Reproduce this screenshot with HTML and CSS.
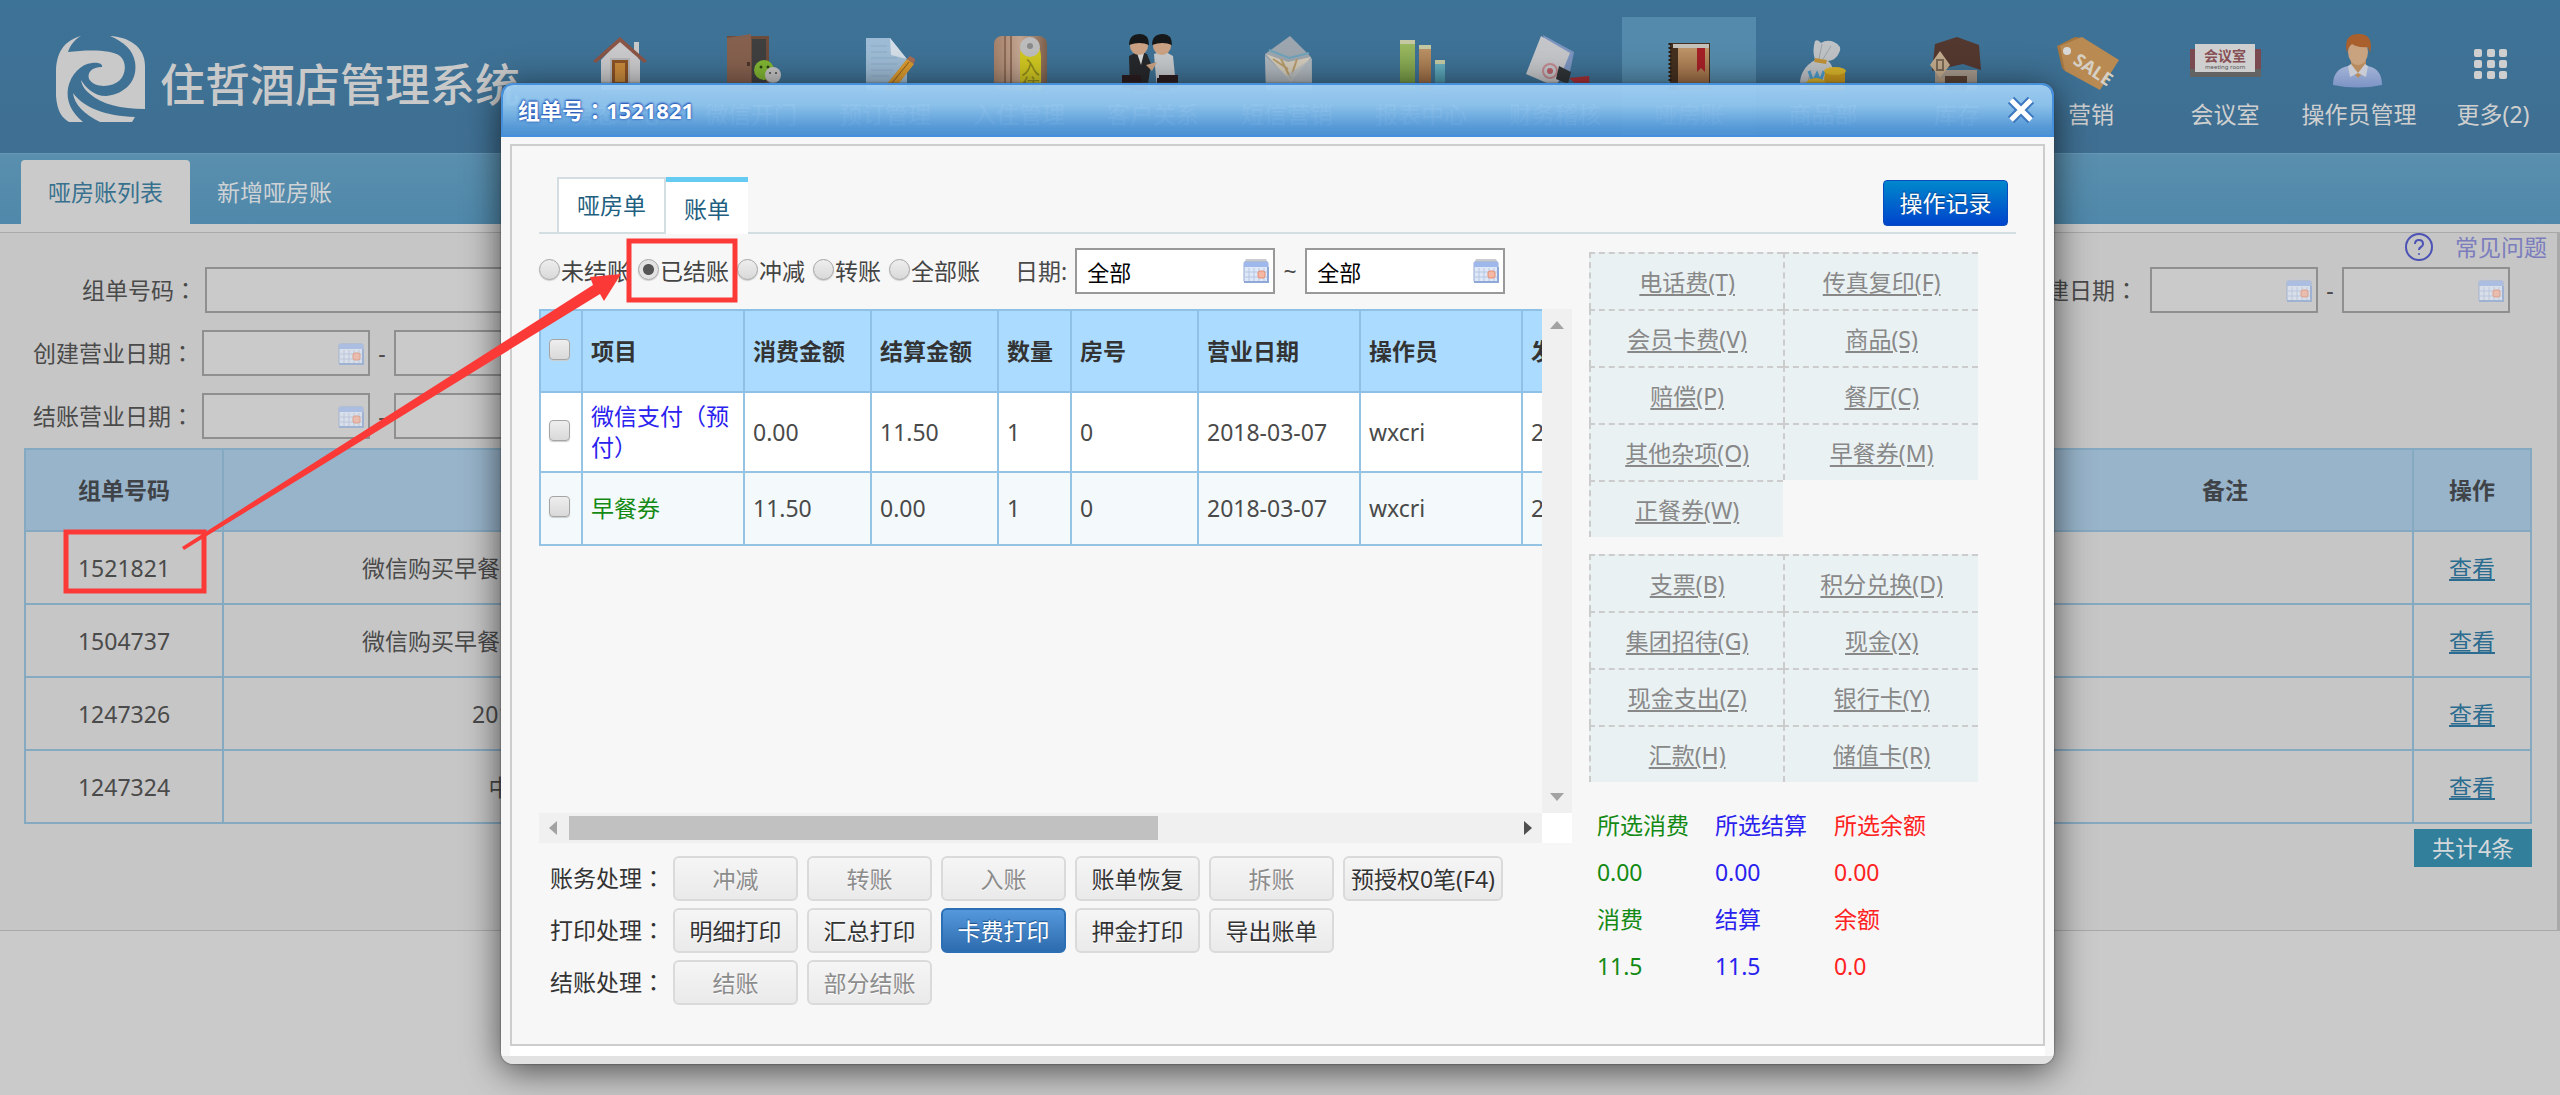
FILE: index.html
```html
<!DOCTYPE html>
<html lang="zh-CN">
<head>
<meta charset="utf-8">
<title>住哲酒店管理系统</title>
<link rel="stylesheet" href="styles.css">
</head>
<body>
<svg class="defs" aria-hidden="true">
  <defs>
    <linearGradient id="g-green" x1="0" x2="0" y1="0" y2="1"><stop offset="0" stop-color="#9dbb62"/><stop offset="1" stop-color="#6f9440"/></linearGradient>
    <linearGradient id="g-brown" x1="0" x2="0" y1="0" y2="1"><stop offset="0" stop-color="#bd9468"/><stop offset="1" stop-color="#94633c"/></linearGradient>
    <linearGradient id="g-cyan" x1="0" x2="0" y1="0" y2="1"><stop offset="0" stop-color="#6fb4c4"/><stop offset="1" stop-color="#3d8ca2"/></linearGradient>
    <linearGradient id="g-blue" x1="0" x2="0" y1="0" y2="1"><stop offset="0" stop-color="#a3b3d6"/><stop offset="1" stop-color="#7c93c4"/></linearGradient>
    <linearGradient id="g-wood" x1="0" x2="1" y1="0" y2="0"><stop offset="0" stop-color="#a38069"/><stop offset=".5" stop-color="#c2a591"/><stop offset="1" stop-color="#7d604c"/></linearGradient>
  </defs>
  <symbol id="calendar" viewBox="0 0 26 24">
    <path d="M3 0h20l2 4H1z" fill="#c9cbd0"/>
    <rect x="1" y="3" width="24" height="20" rx="1" fill="#dfe8f8" stroke="#93a9d0"/>
    <rect x="1" y="3" width="24" height="5" fill="#9fb8ec"/>
    <path d="M6 9v13M11 9v13M16 9v13M21 9v13M2 13h22M2 18h22" stroke="#b7c6e2" fill="none"/>
    <rect x="15" y="12" width="7" height="7" rx="2" fill="#f5b8a4" stroke="#e78e72"/>
    <path d="M1 23h24V8" stroke="#8fa8d6" fill="none" stroke-width="2"/>
  </symbol>
</svg>

<header class="header">
  <div class="brand">
    <svg class="logo" viewBox="0 0 90 86" aria-hidden="true" fill="#c9c9c9">
      <path d="M25 0C10 4 1 14 0 34v26c1 15 6 22 13 26h14C15 76 10 65 12 52c3-14 13-24 24-25 8-1 11 2 10 4-10 0-15 5-13 12 5 9 23 9 31 1 6-6 7-18 0-24-9-7-34-6-52-4 2-6 6-12 13-16z"/>
      <path d="M54 0c18 1 35 10 35 30v43c-24 0-44-5-55-15-5-4-8-8-9-14 5 8 13 16 25 16 20-2 32-16 29-34C77 14 68 6 54 0z"/>
      <path d="M17 57c11 15 33 23 62 24l-3 5H44C28 78 18 68 17 57z"/>
    </svg>
    <span class="brand-name">住哲酒店管理系统</span>
  </div>
  <nav class="nav">
    <a class="nav-item" href="#"><svg class="nav-icon" viewBox="0 0 72 56"><path d="M53 8h5v16h-5z" fill="#c8c8c8"/><path d="M39 6 20 26v30h39V26z" fill="#c9c9cb"/><path d="M39 3 12 27l3 2 24-21 24 21 3-2z" fill="#8a5446"/><path d="M29 24h20v26H29z" fill="#b5b5b8"/><path d="M31 26h16v24H31z" fill="#8b5226"/><path d="M34 29h10v19H34z" fill="#c98a3c"/></svg><span>房态中心</span></a>
    <a class="nav-item" href="#"><svg class="nav-icon" viewBox="0 0 72 56"><path d="M12 2h42v54H12z" fill="#6e4c3c"/><path d="M37 5h14v51H37z" fill="#3f3f3f"/><path d="M12 4 36 0v56H12z" fill="#85604e"/><path d="M32 28h3v4h-3z" fill="#4e3429"/><circle cx="49" cy="36" r="10" fill="#80b533"/><circle cx="46" cy="33" r="1.500" fill="#2c4214"/><circle cx="53" cy="33" r="1.500" fill="#2c4214"/><circle cx="58" cy="41" r="8" fill="#c3c3c3"/><circle cx="55" cy="39" r="1" fill="#444"/><circle cx="61" cy="39" r="1" fill="#444"/></svg><span>微信开门</span></a>
    <a class="nav-item" href="#"><svg class="nav-icon" viewBox="0 0 72 56"><path d="M17 4h24l17 22v30H17z" fill="#9dbbd4"/><path d="m41 4 17 21-16-4z" fill="#d3dde6"/><path d="M22 12h16M22 18h16M22 24h26M22 30h26M22 36h22M22 42h18" stroke="#8babc6" stroke-width="1"/><path d="m58 25 7 5-21 27-9 3 2-9z" fill="#d99a2e"/><path d="m58 25 3-3 5 3-1 5z" fill="#a96b52"/><path d="m60 28-21 26" stroke="#8c5a1c"/></svg><span>预订管理</span></a>
    <a class="nav-item" href="#"><svg class="nav-icon" viewBox="0 0 72 56"><rect x="11" y="2" width="53" height="54" rx="8" fill="url(#g-wood)"/><path d="M22 2v54M28 2v54" stroke="#8c6a55" stroke-width="2"/><path d="M37 22q0-14 10-14t11 14v34H37z" fill="#cfc621"/><circle cx="47" cy="13" r="10" fill="#bcbcbc"/><circle cx="47" cy="12" r="3" fill="#8a8a8a"/><text x="38" y="41" font-size="19" fill="#8f8a1a">入</text><text x="38" y="59" font-size="19" fill="#8f8a1a">住</text></svg><span>入住管理</span></a>
    <a class="nav-item" href="#"><svg class="nav-icon" viewBox="0 0 72 56"><path d="m12 22 10-5 8 3 4 10-4 26H13z" fill="#26282b"/><path d="m37 20 10-3 9 5 2 20-5 14H40z" fill="#c4c8cb"/><path d="m20 19 4 12 3-12z" fill="#d6d6d6"/><path d="M40 44h13v12H40zM5 41h19v13H5zM42 41h19v13H42z" fill="#2b1d1f"/><ellipse cx="22" cy="12" rx="9" ry="9" fill="#caa283"/><ellipse cx="45" cy="12" rx="9" ry="9" fill="#caa283"/><path d="M12 11Q12 0 23 0q9 0 9 11-9-4-20 0zM35 11Q35 0 46 0q9 0 9 11-9-4-20 0z" fill="#16181a"/><path d="m29 31 11-3-5 9z" fill="#caa283"/></svg><span>客户关系</span></a>
    <a class="nav-item" href="#"><svg class="nav-icon" viewBox="0 0 72 56"><path d="M14 20 39 2l21 21 1 33H15z" fill="#9da6ae"/><path d="m15 20 22 8 23-5-20 25z" fill="#d2cbbb"/><path d="m18 16 20 8 20-5" fill="none" stroke="#6ea3bb" stroke-width="2"/><path d="m22 25 15 10M30 25l10 20M46 25l-5 15" stroke="#b79b6a" stroke-width="2"/><path d="m14 22 22 20 5-4 20-14v32H15z" fill="#b3bac0" opacity=".8"/></svg><span>短信营销</span></a>
    <a class="nav-item" href="#"><svg class="nav-icon" viewBox="0 0 72 56"><path d="M15 6h15v50H15z" fill="url(#g-green)"/><path d="M34 11h12v45H34z" fill="url(#g-brown)"/><path d="M50 26h10v30H50z" fill="url(#g-cyan)"/><path d="M15 6h15v4H15zM34 11h12v4H34zM50 26h10v4H50z" fill="#c4c9a4"/></svg><span>报表中心</span></a>
    <a class="nav-item" href="#"><svg class="nav-icon" viewBox="0 0 72 56"><path d="m24 1 31 17-4 20-14 12z" fill="#7b94bf"/><path d="m22 2 29 17-14 34L7 40z" fill="#c4c5c8"/><circle cx="31" cy="37" r="7" fill="none" stroke="#c08a90" stroke-width="2"/><circle cx="31" cy="37" r="3" fill="#b8606a"/><path d="m40 32 12 6-3 12-12-5z" fill="#313538"/><path d="m50 44 20-2 1 12-12-2z" fill="#a82e35"/></svg><span>财务稽核</span></a>
    <a class="nav-item active" href="#"><svg class="nav-icon" viewBox="0 0 72 56"><path d="M17 9h40v47H17z" fill="#45301f"/><path d="M20 10h36v4H20z" fill="#c4c0ba"/><path d="M25 14h31v42H25z" fill="url(#g-brown)"/><path d="M44 14h8v24l-4-4-4 4z" fill="#a32127"/><path d="M17 9v47" stroke="#2c1e14" stroke-width="3" stroke-dasharray="2 2"/></svg><span>哑房账</span></a>
    <a class="nav-item" href="#"><svg class="nav-icon" viewBox="0 0 72 56"><path d="M28 7q3-2 6 2 6-4 13-1 9 4 5 11-3 7-11 8 8 6 6 29H13q-2-21 15-30-3-9 0-19z" fill="#bfc2c5"/><path d="m35 10-3 15M44 12l-8 13M24 36l-4 16" stroke="#9da2a7"/><path d="m28 24 12 2-1 4-12-2z" fill="#bf9337"/><path d="m22 37 4 11 4-8 3 8 4-11" fill="none" stroke="#4b9ccb" stroke-width="3"/><path d="M38 38h20v18H36z" fill="#cc9a1c"/><ellipse cx="48" cy="37" rx="11" ry="4" fill="#d9b42c"/><ellipse cx="29" cy="50" rx="10" ry="6" fill="#d9b42c"/></svg><span>商品部</span></a>
    <a class="nav-item" href="#"><svg class="nav-icon" viewBox="0 0 72 56"><path d="m14 10 22-7 22 8 2 25-18-6-31 7z" fill="#53382f"/><path d="M14 36h42v20H14z" fill="#a79a8d"/><path d="M24 42h22v14H24z" fill="#5b4232"/><path d="m19 17 10 14-10 13L9 31z" fill="#c2ab8d"/><path d="M16 26h6v10h-6z" fill="none" stroke="#7b6955" stroke-width="2"/><path d="M17 44h6v12h-6z" fill="#b59c80"/></svg><span>库存</span></a>
    <a class="nav-item" href="#"><svg class="nav-icon" viewBox="0 0 72 56"><path d="m2 12 18-9 8 1-17 7-1 26-3-3z" fill="#a57640"/><path d="m5 12 22-9 37 23-19 30L10 37z" fill="#b98a52"/><circle cx="12" cy="17" r="4" fill="#d8d8d8"/><text class="sale-text" x="17" y="29" transform="rotate(34 17 29)">SALE</text></svg><span>营销</span></a>
    <a class="nav-item" href="#"><svg class="nav-icon" viewBox="0 0 72 56"><path d="M1 15h71v28H1z" fill="#636363"/><path d="M1 15h5v20H1zM66 15h6v20h-6z" fill="#7a4a50"/><path d="M6 10h60v28H6z" fill="#cfcfcf"/><text class="room-text" x="15" y="27">会议室</text><text class="room-sub" x="16" y="35">meeting room</text></svg><span>会议室</span></a>
    <a class="nav-item" href="#"><svg class="nav-icon" viewBox="0 0 72 56"><path d="M10 51q0-16 15-19l10 6 10-6q14 3 14 19-24 5-49 0z" fill="url(#g-blue)"/><path d="M28 24h15v12l-8 8-7-8z" fill="#b98c60"/><path d="m25 32 3-2 7 9-8 4zM45 32l-3-2-7 9 8 4z" fill="#c9ccd4"/><ellipse cx="35" cy="18" rx="10" ry="13" fill="#c9a280"/><path d="M24 19C21 4 27 0 36 0c10 0 14 7 11 19l-2-6c-7 1-13-1-16-3q-4 3-5 9z" fill="#a9602c"/></svg><span>操作员管理</span></a>
    <a class="nav-item" href="#"><svg class="nav-icon" viewBox="0 0 72 56"><g fill="#cfcfcf"><rect x="17" y="15" width="8" height="8" rx="2"/><rect x="30" y="15" width="8" height="8" rx="2"/><rect x="42" y="15" width="8" height="8" rx="2"/><rect x="17" y="26" width="8" height="8" rx="2"/><rect x="30" y="26" width="8" height="8" rx="2"/><rect x="42" y="26" width="8" height="8" rx="2"/><rect x="17" y="37" width="8" height="8" rx="2"/><rect x="30" y="37" width="8" height="8" rx="2"/><rect x="42" y="37" width="8" height="8" rx="2"/></g></svg><span>更多(2)</span></a>
  </nav>
</header>

<nav class="subnav">
  <a class="subnav-tab current" href="#">哑房账列表</a>
  <a class="subnav-tab" href="#">新增哑房账</a>
</nav>

<main class="panel">
  <a class="faq" href="#">
    <svg class="faq-icon" viewBox="0 0 30 30" aria-hidden="true"><circle cx="15" cy="15" r="13" fill="none" stroke="#4d53b5" stroke-width="2"/><path d="M11 12q0-4 4-4t4 4q0 2-2 3-2 1-2 3" fill="none" stroke="#4d53b5" stroke-width="2"/><circle cx="15" cy="22" r="1" fill="#4d53b5"/></svg>
    <span>常见问题</span>
  </a>
  <form class="filters">
    <div class="filter-row">
      <label class="filter-label code" for="code">组单号码<span class="colon" lang="zh-TW">：</span></label>
      <input class="box wide" id="code" type="text">
      <div class="filter-end">
        <label class="filter-label" for="c1">创建日期<span class="colon" lang="zh-TW">：</span></label>
        <span class="date"><input class="box" id="c1" type="text"><svg class="cal"><use href="#calendar"/></svg></span>
        <span class="dash">-</span>
        <span class="date"><input class="box" type="text" aria-label="创建日期止"><svg class="cal"><use href="#calendar"/></svg></span>
      </div>
    </div>
    <div class="filter-row">
      <label class="filter-label" for="b1">创建营业日期<span class="colon" lang="zh-TW">：</span></label>
      <span class="date"><input class="box" id="b1" type="text"><svg class="cal"><use href="#calendar"/></svg></span>
      <span class="dash">-</span>
      <span class="date"><input class="box" type="text" aria-label="创建营业日期止"><svg class="cal"><use href="#calendar"/></svg></span>
    </div>
    <div class="filter-row">
      <label class="filter-label" for="s1">结账营业日期<span class="colon" lang="zh-TW">：</span></label>
      <span class="date"><input class="box" id="s1" type="text"><svg class="cal"><use href="#calendar"/></svg></span>
      <span class="dash">-</span>
      <span class="date"><input class="box" type="text" aria-label="结账营业日期止"><svg class="cal"><use href="#calendar"/></svg></span>
    </div>
  </form>
  <table class="orders">
    <colgroup><col class="o-code"><col class="o-name"><col><col class="o-note"><col class="o-op"></colgroup>
    <thead><tr><th>组单号码</th><th>组单名称</th><th></th><th>备注</th><th>操作</th></tr></thead>
    <tbody>
      <tr><td>1521821</td><td>微信购买早餐券自动创建的哑房账单</td><td></td><td></td><td><a href="#">查看</a></td></tr>
      <tr><td>1504737</td><td>微信购买早餐券自动创建的哑房账单</td><td></td><td></td><td><a href="#">查看</a></td></tr>
      <tr><td>1247326</td><td>201712哑房账</td><td></td><td></td><td><a href="#">查看</a></td></tr>
      <tr><td>1247324</td><td>中餐厅挂账</td><td></td><td></td><td><a href="#">查看</a></td></tr>
    </tbody>
  </table>
  <div class="total">共计4条</div>
</main>

<section class="dialog" role="dialog" aria-label="组单号：1521821">
  <div class="dialog-title">
    <h1>组单号<span class="colon" lang="zh-TW">：</span>1521821</h1>
    <button class="close" type="button" aria-label="关闭"><svg viewBox="0 0 32 32"><path d="m6 6 20 20M26 6 6 26" stroke="#3b78c0" stroke-width="9"/><path d="m6 6 20 20M26 6 6 26" stroke="#fff" stroke-width="5"/></svg></button>
  </div>
  <div class="dialog-body">
  <div class="dialog-frame">
    <div class="tabs">
      <a class="tab" href="#">哑房单</a>
      <a class="tab on" href="#">账单</a>
      <button class="log-btn" type="button">操作记录</button>
    </div>
    <div class="columns">
      <div class="left">
        <div class="status">
          <label class="opt"><input type="radio" name="st">未结账</label>
          <label class="opt"><input type="radio" name="st" checked>已结账</label>
          <label class="opt"><input type="radio" name="st">冲减</label>
          <label class="opt"><input type="radio" name="st">转账</label>
          <label class="opt"><input type="radio" name="st">全部账</label>
          <label class="range-label" for="d1">日期:</label>
          <span class="date big"><input class="box" id="d1" type="text" value="全部"><svg class="cal"><use href="#calendar"/></svg></span>
          <span class="tilde">~</span>
          <span class="date big"><input class="box" type="text" value="全部" aria-label="日期止"><svg class="cal"><use href="#calendar"/></svg></span>
        </div>
        <div class="scroller">
          <div class="viewport">
            <table class="bill">
              <colgroup><col class="w-check"><col class="w-item"><col class="w-money"><col class="w-money"><col class="w-qty"><col class="w-money"><col class="w-item"><col class="w-item"><col class="w-item"></colgroup>
              <thead><tr><th><input type="checkbox" aria-label="全选"></th><th>项目</th><th>消费金额</th><th>结算金额</th><th>数量</th><th>房号</th><th>营业日期</th><th>操作员</th><th>发生时间</th></tr></thead>
              <tbody>
                <tr class="tall"><td><input type="checkbox" aria-label="微信支付"></td><td class="blue">微信支付<span class="paren" lang="zh-TW">（</span>预付<span class="paren" lang="zh-TW">）</span></td><td>0.00</td><td>11.50</td><td>1</td><td>0</td><td>2018-03-07</td><td>wxcri</td><td>2018-03-07</td></tr>
                <tr><td><input type="checkbox" aria-label="早餐券"></td><td class="green">早餐券</td><td>11.50</td><td>0.00</td><td>1</td><td>0</td><td>2018-03-07</td><td>wxcri</td><td>2018-03-07</td></tr>
              </tbody>
            </table>
          </div>
          <div class="vbar"><svg viewBox="0 0 14 8"><path d="M0 8 7 0l7 8z" fill="#a3a3a3"/></svg><svg viewBox="0 0 14 8"><path d="m0 0 7 8 7-8z" fill="#a3a3a3"/></svg></div>
          <div class="hbar"><svg viewBox="0 0 8 14"><path d="M8 0 0 7l8 7z" fill="#a3a3a3"/></svg><div class="thumb-track"><div class="thumb"></div></div><svg viewBox="0 0 8 14"><path d="m0 0 8 7-8 7z" fill="#4f4f4f"/></svg></div>
          <div class="corner"></div>
        </div>
        <div class="actions">
          <div class="action-row"><span class="action-label">账务处理<span class="colon" lang="zh-TW">：</span></span><button class="btn" disabled>冲减</button><button class="btn" disabled>转账</button><button class="btn" disabled>入账</button><button class="btn">账单恢复</button><button class="btn" disabled>拆账</button><button class="btn long">预授权0笔(F4)</button></div>
          <div class="action-row"><span class="action-label">打印处理<span class="colon" lang="zh-TW">：</span></span><button class="btn">明细打印</button><button class="btn">汇总打印</button><button class="btn primary">卡费打印</button><button class="btn">押金打印</button><button class="btn">导出账单</button></div>
          <div class="action-row"><span class="action-label">结账处理<span class="colon" lang="zh-TW">：</span></span><button class="btn" disabled>结账</button><button class="btn" disabled>部分结账</button></div>
        </div>
      </div>
      <aside class="side">
        <div class="links">
          <a href="#">电话费(T)</a><a href="#">传真复印(F)</a>
          <a href="#">会员卡费(V)</a><a href="#">商品(S)</a>
          <a href="#">赔偿(P)</a><a href="#">餐厅(C)</a>
          <a href="#">其他杂项(O)</a><a href="#">早餐券(M)</a>
          <a href="#">正餐券(W)</a>
        </div>
        <div class="links">
          <a href="#">支票(B)</a><a href="#">积分兑换(D)</a>
          <a href="#">集团招待(G)</a><a href="#">现金(X)</a>
          <a href="#">现金支出(Z)</a><a href="#">银行卡(Y)</a>
          <a href="#">汇款(H)</a><a href="#">储值卡(R)</a>
        </div>
        <div class="sums">
          <span class="green">所选消费</span><span class="blue">所选结算</span><span class="red">所选余额</span>
          <span class="green">0.00</span><span class="blue">0.00</span><span class="red">0.00</span>
          <span class="green">消费</span><span class="blue">结算</span><span class="red">余额</span>
          <span class="green">11.5</span><span class="blue">11.5</span><span class="red">0.0</span>
        </div>
      </aside>
    </div>
  </div>
  </div>
</section>

<svg class="marks" viewBox="0 0 760 620" aria-hidden="true">
  <rect x="66" y="532" width="138" height="59" fill="none" stroke="#fb3a38" stroke-width="5"/>
  <rect x="629" y="241" width="106" height="59" fill="none" stroke="#fb3a38" stroke-width="5"/>
  <path d="M182 547 593 285l-3-8 31-3-17 27-4-7L184 550z" fill="#fb3a38"/>
</svg>
</body>
</html>
```
FILE: styles.css
```css
* { box-sizing: border-box; }

body {
  margin: 0;
  position: relative;
  min-height: 1095px;
  background: #cacaca;
  color: #4a4a4a;
  font: 23px/30px "Noto Sans", "Noto Sans CJK SC", sans-serif;
  overflow-x: hidden;
}

input, button { font: inherit; color: inherit; }
.defs { position: absolute; width: 0; height: 0; }

/* full-width punctuation sits in the middle of its square */
.colon, .paren { font-family: "Noto Sans CJK TC", sans-serif; line-height: 1; }

/* top bar */
.header {
  display: flex;
  justify-content: space-between;
  height: 153px;
  background: linear-gradient(#3d7397, #3f6f92);
}
.brand { display: flex; align-items: center; gap: 14px; padding: 5px 0 0 56px; flex: none; }
.logo { width: 90px; height: 86px; }
.brand-name { font-size: 45px; font-weight: 500; line-height: 60px; color: #c9c9c9; white-space: nowrap; padding-top: 12px; }
.nav { display: flex; margin-top: 17px; }
.nav-item {
  width: 134px;
  padding-top: 17px;
  display: flex;
  flex-direction: column;
  align-items: center;
  gap: 9px;
  color: #cfcfcf;
  text-decoration: none;
  white-space: nowrap;
}
.nav-item.active { background: #548aab; }
.nav-icon { width: 72px; height: 56px; flex: none; }
.sale-text { font: 700 18px "Noto Sans", sans-serif; fill: #d6cfc4; }
.room-text { font: 700 14px "Noto Sans CJK SC", sans-serif; fill: #875055; }
.room-sub { font: 6px "Noto Sans", sans-serif; fill: #555; }

.subnav {
  display: flex;
  height: 71px;
  padding: 6px 0 0 21px;
  border-top: 1px solid #6499b8;
  background: linear-gradient(#5a8fae, #4f88aa);
}
.subnav-tab { padding: 17px 27px; color: #cfd3d5; text-decoration: none; }
.subnav-tab.current { background: #cacaca; color: #37718f; border-radius: 4px 4px 0 0; }

/* list page */
.panel {
  position: relative;
  margin-top: 8px;
  padding: 34px 25px 63px 24px;
  border: solid #a9a9a9;
  border-width: 1px 3px 1px 0;
  background: #c6c6c6;
}
.faq {
  position: absolute;
  top: -1px;
  right: 10px;
  display: flex;
  gap: 21px;
  color: #7b7dbd;
  text-decoration: none;
}
.faq-icon { width: 30px; height: 30px; }
.filters { display: flex; flex-direction: column; gap: 17px; }
.filter-row { display: flex; align-items: center; height: 46px; }
.filter-label { width: 178px; text-align: right; padding-right: 8px; white-space: nowrap; flex: none; }
.filter-label.code { width: 181px; }
.filter-end { display: flex; align-items: center; margin-left: auto; padding-right: 22px; }
.filter-end .filter-label { width: auto; padding-right: 12px; }
.box {
  width: 168px;
  height: 46px;
  border: 2px solid #8f8f8f;
  background: #cacaca;
  padding: 0 10px;
  outline: 0;
}
.box.wide { width: 420px; }
.date { position: relative; display: flex; }
.cal { position: absolute; right: 6px; top: 11px; width: 26px; height: 24px; }
.panel .cal { opacity: .7; }
.dash { width: 24px; text-align: center; }

.orders { width: 100%; margin-top: 9px; border-collapse: collapse; table-layout: fixed; text-align: center; }
.orders th, .orders td { border: 2px solid #85a9c0; padding: 0; height: 73px; white-space: nowrap; }
.orders th { height: 82px; background: #98b4ca; color: #3f4347; }
.o-code { width: 198px; }
.o-name { width: 646px; }
.o-note { width: 376px; }
.o-op { width: 118px; }
.orders a { color: #2b6c90; }
.total { width: 118px; margin: 5px 0 0 auto; background: #327f9c; color: #d4d8da; line-height: 38px; text-align: center; }

/* dialog */
.dialog {
  position: absolute;
  top: 83px;
  left: 19.57%;
  right: 19.77%;
  border-radius: 12px;
  box-shadow: 0 6px 36px rgba(0, 0, 0, .65), 0 0 2px #555;
}
.dialog-title {
  display: flex;
  align-items: center;
  justify-content: space-between;
  height: 54px;
  padding: 0 15px;
  border-radius: 12px 12px 0 0;
  border: 2px solid #4590dd;
  background: linear-gradient(rgba(161, 207, 244, .95), rgba(143, 197, 238, .95) 40%, rgba(87, 155, 218, .95) 85%, rgba(80, 148, 215, .95)) padding-box;
}
.dialog-title h1 {
  margin: 0;
  font-size: 22px;
  line-height: 30px;
  color: #fff;
  text-shadow: 0 0 3px #1d4fb4, 0 -1px 2px #1d4fb4;
}
.close { width: 32px; height: 32px; padding: 0; border: 0; background: none; }
.close svg { display: block; }
.dialog-body {
  padding: 7px 9px 18px;
  border-radius: 0 0 12px 12px;
  background: linear-gradient(#f7f7f7, #f7f7f7) top / 100% calc(100% - 8px) no-repeat, linear-gradient(#e2e2e2, #e2e2e2);
}
.dialog-frame {
  padding: 31px 27px 39px;
  border: 2px solid #cdcdcd;
  background: #f7f7f7;
  box-shadow: 0 10px 0 #fff;
}
.tabs {
  display: flex;
  align-items: flex-end;
  padding: 0 8px 0 18px;
  border-bottom: 2px solid #d3dee2;
}
.tab {
  height: 55px;
  padding: 11px 18px 0;
  border: 2px solid #d3dee2;
  border-bottom: 0;
  background: #fff;
  color: #1f5f80;
  text-decoration: none;
}
.tab.on { height: 57px; margin-bottom: -2px; padding-top: 12px; border: 0; border-top: 5px solid #66cbf3; }
.log-btn {
  height: 46px;
  width: 125px;
  margin: 0 0 6px auto;
  padding: 0;
  border: 1px solid #0a4bbf;
  border-radius: 4px;
  background: linear-gradient(#0088cc, #0044cc);
  color: #fff;
  text-shadow: 0 -1px 1px #003a80;
}
.columns { display: flex; justify-content: space-between; margin: 14px 38px 0 0; }
.left { width: 1033px; }
.status { display: flex; align-items: center; height: 46px; margin-bottom: 15px; white-space: nowrap; }
.opt { display: flex; align-items: center; gap: 1px; margin-right: 8px; color: #444; }
input[type="radio"], input[type="checkbox"] {
  appearance: none;
  flex: none;
  width: 21px;
  height: 21px;
  margin: 0 0 4px;
  border: 1px solid #a5a5a5;
  border-radius: 50%;
  background: linear-gradient(#eee, #d9d9d9);
  box-shadow: 0 1px 1px #ccc;
}
input[type="radio"]:checked { background: radial-gradient(circle, #555 5px, #e3e3e3 6px); }
input[type="checkbox"] { display: block; border-radius: 4px; }
.range-label { margin: 0 8px 0 27px; }
.big .box { width: 200px; background: #fff; border-color: #999; color: #000; font-size: 22px; }
.tilde { width: 30px; text-align: center; }

.scroller { display: grid; grid-template-columns: 1fr 30px; grid-template-rows: 504px 30px; }
.viewport { overflow: hidden; min-width: 0; }
.bill { width: 1144px; border-collapse: collapse; table-layout: fixed; text-align: left; line-height: 31px; }
.bill th, .bill td { height: 73px; padding: 0 8px; border: 2px solid #94c3e4; background: #f4fafb; }
.bill th { height: 82px; background: #abdcff; border-color: #8fc1e6; color: #333; white-space: nowrap; }
.bill .tall td { height: 80px; background: #fff; }
.w-check { width: 42px; }
.w-item { width: 162px; }
.w-money { width: 127px; }
.w-qty { width: 73px; }
.bill .blue, .blue { color: #2a22ee; }
.bill .green, .green { color: #148a14; }
.red { color: #f22; }
.vbar { background: #f0f0f0; display: flex; flex-direction: column; align-items: center; justify-content: space-between; padding: 12px 0; }
.vbar svg { width: 14px; height: 8px; }
.hbar { background: #f0f0f0; display: flex; align-items: center; padding: 0 10px; gap: 12px; }
.hbar svg { width: 8px; height: 14px; flex: none; }
.thumb-track { flex: 1; }
.thumb { width: 62.5%; height: 24px; background: #c1c1c1; }
.corner { background: #fff; }

.actions { display: flex; flex-direction: column; gap: 7px; padding: 13px 0 0 11px; }
.action-row { display: flex; gap: 9px; }
.action-label { width: 114px; line-height: 45px; color: #333; white-space: nowrap; }
.btn {
  width: 125px;
  height: 45px;
  padding: 0;
  border: 2px solid #dadada;
  border-radius: 6px;
  background: linear-gradient(#f5f5f5, #eaeaea);
  color: #333;
  text-shadow: 0 1px 0 #fff;
  white-space: nowrap;
}
.btn:disabled { color: #8c8c8c; }
.btn.long { width: 160px; }
.btn.primary { border-color: #2d6fb5; background: linear-gradient(#5598dc, #2d6cae); color: #fff; text-shadow: 0 -1px 1px #1d4f86; }

.side { width: 389px; padding-top: 4px; }
.links { display: flex; flex-wrap: wrap; margin-bottom: 17px; }
.links a {
  width: 50%;
  height: 57px;
  padding-top: 13px;
  border: dashed #ccc;
  border-width: 2px 0 0 2px;
  background: #eaf1f3;
  color: #888;
  text-align: center;
  text-underline-offset: 3px;
}
.sums { display: grid; grid-template-columns: 118px 119px 1fr; row-gap: 17px; padding: 11px 0 0 8px; }

/* highlight marks over the page */
.marks { position: absolute; left: 0; top: 0; width: 760px; height: 620px; pointer-events: none; }
```
